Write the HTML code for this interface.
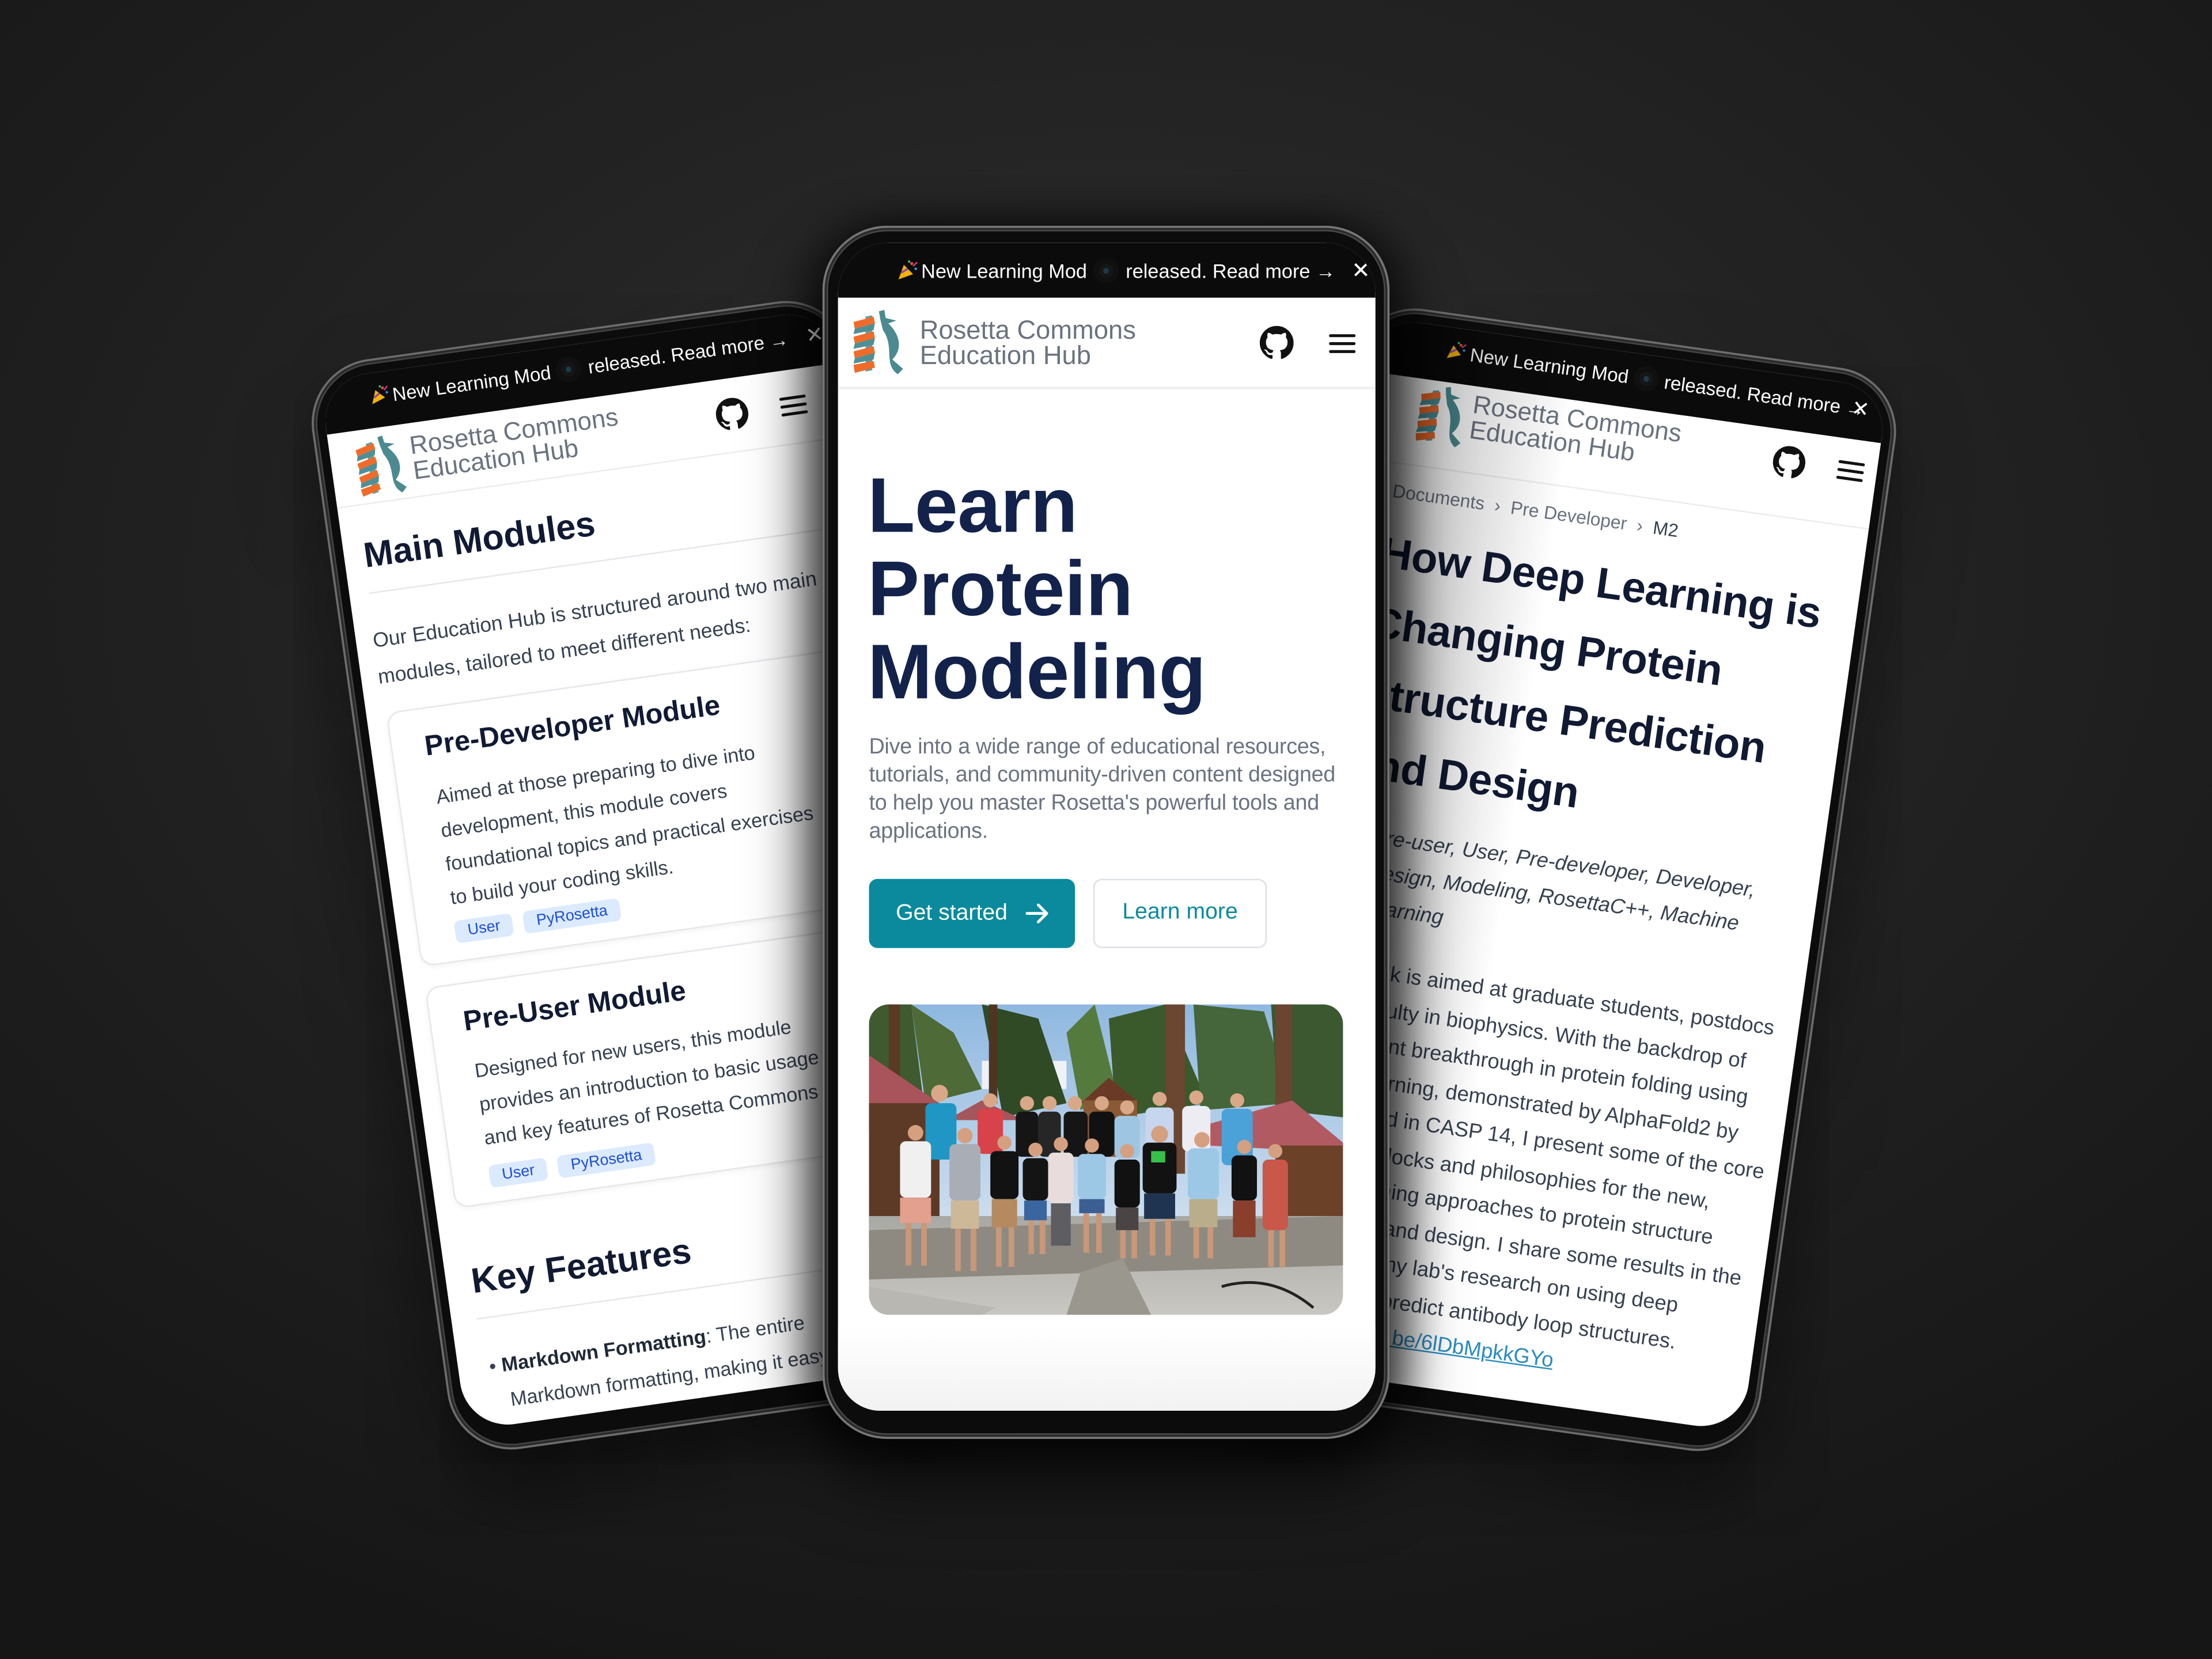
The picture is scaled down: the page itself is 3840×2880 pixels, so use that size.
<!DOCTYPE html>
<html><head><meta charset="utf-8">
<style>
*{margin:0;padding:0;box-sizing:border-box}
html,body{width:3840px;height:2880px;overflow:hidden;background:#1a1a1a}
#bg{position:absolute;left:0;top:0;width:3840px;height:2880px;background:radial-gradient(ellipse 75% 70% at 50% 35%,#2f2f2f 0%,#232323 45%,#161616 100%)}
#s{position:absolute;left:0;top:0;width:1568px;height:1176px;transform:scale(2.44898);transform-origin:0 0;font-family:"Liberation Sans",sans-serif}
.phone{position:absolute;background:#0c0c0c;border-radius:46px;box-shadow:inset 0 0 0 1.5px #6d6d6d,inset 0 0 0 3px #2a2a2a,inset 0 0 0 4px #444,0 25px 60px rgba(0,0,0,.65)}
.screen{position:absolute;overflow:hidden;background:#fff;border-radius:34px}
.banner{position:absolute;left:0;top:0;right:0;height:39px;background:#0b0b0b;color:#fff;font-size:14px;white-space:nowrap}
.cam{position:absolute;width:18px;height:18px;border-radius:50%;background:#161616;box-shadow:inset 0 0 0 4px #101010}
.cam:after{content:"";position:absolute;left:7px;top:7px;width:4px;height:4px;border-radius:50%;background:#1d3a4a}
.abs{position:absolute;white-space:nowrap}
.logotxt{color:#6b7280;line-height:18px}
.tag{display:inline-block;background:#dbeafe;color:#1d4ed8;font-size:11px;padding:2px 9px;border-radius:4px;margin-right:8px}
.card{position:absolute;border:1px solid #e5e7eb;border-radius:10px;box-shadow:0 1px 4px rgba(0,0,0,.06);background:#fff}
.navy{color:#111a33}
</style></head><body>
<div id="bg"></div>
<div id="s">

<svg width="0" height="0" style="position:absolute">
<defs>
<symbol id="logo" viewBox="0 0 40 48">
<path d="M9 5 L14 4 L14 45 L9 46 Z" fill="#5f9ea3"/>
<path d="M0 9 L15 5 L16 10 L1 14 Z" fill="#ef6b2a"/>
<path d="M1 14 L16 10 L15 15 L0 18 Z" fill="#4f8f94"/>
<path d="M0 20 L15 16 L16 21 L1 25 Z" fill="#ef6b2a"/>
<path d="M1 25 L16 21 L15 26 L0 29 Z" fill="#4f8f94"/>
<path d="M0 31 L15 27 L16 32 L1 36 Z" fill="#ef6b2a"/>
<path d="M1 36 L16 32 L15 37 L0 40 Z" fill="#4f8f94"/>
<path d="M0 41 L15 38 L16 43 L1 47 Z" fill="#ef6b2a"/>
<path d="M19 1 L23 0 L24 6 L32 8 L26 10 C36 20 36 30 29 37 L37 44 L33 48 C22 40 31 28 22 15 L20 7 Z" fill="#4a8a90"/>
</symbol>
<symbol id="gh" viewBox="0 0 16 16"><path fill="#111" d="M8 0C3.58 0 0 3.58 0 8c0 3.54 2.29 6.530 5.47 7.59.4.07.55-.17.55-.38 0-.19-.01-.82-.01-1.49-2.01.37-2.53-.49-2.69-.94-.09-.23-.48-.94-.82-1.13-.28-.15-.68-.52-.01-.53.63-.01 1.08.58 1.23.82.72 1.21 1.87.87 2.33.66.07-.52.28-.87.51-1.07-1.78-.2-3.64-.89-3.64-3.95 0-.87.31-1.59.82-2.15-.08-.2-.36-1.02.08-2.12 0 0 .67-.21 2.2.82.64-.18 1.32-.27 2-.27.68 0 1.36.09 2 .27 1.53-1.04 2.2-.82 2.2-.82.44 1.1.16 1.92.08 2.12.51.56.82 1.27.82 2.15 0 3.07-1.87 3.75-3.65 3.95.29.25.54.73.54 1.48 0 1.07-.01 1.93-.01 2.2 0 .21.15.46.55.38A8.013 8.013 0 0016 8c0-4.42-3.58-8-8-8z"/></symbol>
<symbol id="ham" viewBox="0 0 20 16"><rect x="0" y="1" width="20" height="2.2" rx="1" fill="#111"/><rect x="0" y="7" width="20" height="2.2" rx="1" fill="#111"/><rect x="0" y="13" width="20" height="2.2" rx="1" fill="#111"/></symbol>
<symbol id="pop" viewBox="0 0 16 16"><path d="M1 15 L5 4 L12 11 Z" fill="#f4b400"/><path d="M3 10 L8 7" stroke="#8e44ad" stroke-width="1.5"/><circle cx="11" cy="3" r="1.2" fill="#e74c3c"/><circle cx="14" cy="7" r="1" fill="#3498db"/><circle cx="9" cy="1.5" r="0.9" fill="#2ecc71"/><path d="M12 5 L15 2" stroke="#e84393" stroke-width="1"/></symbol>
</defs>
</svg>

<!-- LEFT PHONE -->
<div class="phone" style="left:215px;top:261px;width:385px;height:780px;transform-origin:0 0;transform:rotate(-8deg)">
 <div class="screen" style="left:10px;top:10px;right:10px;bottom:18px">
  <div class="banner">
   <svg class="abs" style="left:34px;top:9px" width="14" height="14"><use href="#pop"/></svg>
   <span class="abs" style="left:50px;top:10px;font-size:13.5px">New Learning Mod</span>
   <div class="cam" style="left:167px;top:8px"></div>
   <span class="abs" style="left:190px;top:10px;font-size:13.5px">released. Read more →</span>
   <span class="abs" style="left:346px;top:8px;font-size:15px">✕</span>
  </div>
  <svg class="abs" style="left:18px;top:45px" width="36" height="42"><use href="#logo"/></svg>
  <div class="abs logotxt" style="left:57px;top:46px;font-size:18px">Rosetta Commons<br>Education Hub</div>
  <svg class="abs" style="left:275px;top:53px" width="23" height="23"><use href="#gh"/></svg>
  <svg class="abs" style="left:321px;top:57px" width="19" height="15"><use href="#ham"/></svg>
  <div class="abs" style="left:0;right:0;top:91px;height:1px;background:#ececec"></div>
  <div class="abs navy" style="left:14px;top:114px;font-size:25px;font-weight:bold">Main Modules</div>
  <div class="abs" style="left:14px;right:0;top:154px;height:1px;background:#e5e7eb"></div>
  <div class="abs" style="left:12px;top:176px;font-size:14.5px;line-height:26px;color:#374151">Our Education Hub is structured around two main<br>modules, tailored to meet different needs:</div>
  <div class="card" style="left:14px;top:240px;width:380px;height:182px">
   <div class="abs navy" style="left:23px;top:16px;font-size:20px;font-weight:bold">Pre-Developer Module</div>
   <div class="abs" style="left:26px;top:51px;font-size:14px;line-height:24px;color:#374151">Aimed at those preparing to dive into<br>development, this module covers<br>foundational topics and practical exercises<br>to build your coding skills.</div>
   <div class="abs" style="left:26px;top:150px"><span class="tag">User</span><span class="tag">PyRosetta</span></div>
  </div>
  <div class="card" style="left:14px;top:437px;width:380px;height:158px">
   <div class="abs navy" style="left:23px;top:16px;font-size:20px;font-weight:bold">Pre-User Module</div>
   <div class="abs" style="left:26px;top:50px;font-size:14px;line-height:24px;color:#374151">Designed for new users, this module<br>provides an introduction to basic usage<br>and key features of Rosetta Commons</div>
   <div class="abs" style="left:26px;top:128px"><span class="tag">User</span><span class="tag">PyRosetta</span></div>
  </div>
  <div class="abs navy" style="left:18px;top:634px;font-size:25px;font-weight:bold">Key Features</div>
  <div class="abs" style="left:18px;right:0;top:674px;height:1px;background:#e5e7eb"></div>
  <div class="abs" style="left:22px;top:697px;font-size:14px;line-height:25px;color:#374151">• <b style="color:#1f2937">Markdown Formatting</b>: The entire<br>&nbsp;&nbsp;&nbsp;Markdown formatting, making it easy<br>&nbsp;&nbsp;&nbsp;and it also has a translation</div>
 </div>
</div>

<!-- RIGHT PHONE -->
<div class="phone" style="left:960px;top:267px;width:390px;height:775px;transform-origin:100% 0;transform:rotate(8deg)">
 <div class="screen" style="left:10px;top:10px;right:10px;bottom:18px">
  <div class="banner">
   <svg class="abs" style="left:56px;top:9px" width="14" height="14"><use href="#pop"/></svg>
   <span class="abs" style="left:73px;top:10px;font-size:13.5px">New Learning Mod</span>
   <div class="cam" style="left:190px;top:8px"></div>
   <span class="abs" style="left:212px;top:10px;font-size:13.5px">released. Read more →</span>
   <span class="abs" style="left:346px;top:8px;font-size:15px">✕</span>
  </div>
  <svg class="abs" style="left:42px;top:42px" width="36" height="42"><use href="#logo"/></svg>
  <div class="abs logotxt" style="left:80px;top:43px;font-size:18px">Rosetta Commons<br>Education Hub</div>
  <svg class="abs" style="left:296px;top:50px" width="23" height="23"><use href="#gh"/></svg>
  <svg class="abs" style="left:342px;top:54px" width="19" height="15"><use href="#ham"/></svg>
  <div class="abs" style="left:0;right:0;top:100px;height:1px;background:#ececec"></div>
  <div class="abs" style="left:32px;top:113px;font-size:13px;color:#6b7280">Documents &nbsp;›&nbsp; Pre Developer &nbsp;›&nbsp; <span style="color:#374151">M2</span></div>
  <div class="abs navy" style="left:30px;top:140px;font-size:30.5px;font-weight:bold;line-height:50px;letter-spacing:-.2px">How Deep Learning is<br>Changing Protein<br>Structure Prediction<br>and Design</div>
  <div class="abs" style="left:52px;top:354px;font-size:14.8px;line-height:25px;font-style:italic;color:#374151">Pre-user, User, Pre-developer, Developer,<br>Design, Modeling, RosettaC++, Machine<br>Learning</div>
  <div class="abs" style="left:30px;top:449px;font-size:14.9px;line-height:25.5px;color:#374151">This talk is aimed at graduate students, postdocs<br>and faculty in biophysics. With the backdrop of<br>the recent breakthrough in protein folding using<br>deep learning, demonstrated by AlphaFold2 by<br>DeepMind in CASP 14, I present some of the core<br>building blocks and philosophies for the new,<br>deep learning approaches to protein structure<br>prediction and design. I share some results in the<br>context of my lab's research on using deep<br>learning to predict antibody loop structures.<br><span style="color:#2b8cc0;text-decoration:underline">https://youtu.be/6lDbMpkkGYo</span></div>
  <div class="abs" style="left:0;top:0;width:150px;bottom:0;background:linear-gradient(to right,rgba(0,0,0,.35),rgba(0,0,0,0))"></div>
 </div>
</div>

<!-- CENTER PHONE -->
<div class="phone" style="left:583px;top:160px;width:402px;height:860px;box-shadow:inset 0 0 0 1.5px #777,inset 0 0 0 3px #2a2a2a,inset 0 0 0 4px #484848,0 30px 80px rgba(0,0,0,.7),-10px 0 30px rgba(0,0,0,.5),10px 0 30px rgba(0,0,0,.5)">
 <div class="screen" style="left:11px;top:12px;right:10px;bottom:20px;border-radius:36px 36px 30px 30px">
  <div class="banner">
   <svg class="abs" style="left:42px;top:12px" width="15" height="15"><use href="#pop"/></svg>
   <span class="abs" style="left:59px;top:12px">New Learning Mod</span>
   <div class="cam" style="left:181px;top:11px"></div>
   <span class="abs" style="left:204px;top:12px">released. Read more →</span>
   <span class="abs" style="left:364px;top:10px;font-size:16px">✕</span>
  </div>
  <svg class="abs" style="left:11px;top:47px" width="38" height="47"><use href="#logo"/></svg>
  <div class="abs logotxt" style="left:58px;top:53px;font-size:18.5px">Rosetta Commons<br>Education Hub</div>
  <svg class="abs" style="left:299px;top:59px" width="24" height="24"><use href="#gh"/></svg>
  <svg class="abs" style="left:348px;top:64px" width="19" height="15"><use href="#ham"/></svg>
  <div class="abs" style="left:0;right:0;top:102px;height:2px;background:#f0f0f0"></div>
  <div class="abs" style="left:21px;top:157px;font-size:55px;font-weight:bold;line-height:59px;color:#13224a;letter-spacing:-.2px">Learn<br>Protein<br>Modeling</div>
  <div class="abs" style="left:22px;top:348px;font-size:15.4px;line-height:20px;color:#6b7280;letter-spacing:-.1px">Dive into a wide range of educational resources,<br>tutorials, and community-driven content designed<br>to help you master Rosetta's powerful tools and<br>applications.</div>
  <div class="abs" style="left:22px;top:451px;width:146px;height:49px;background:#0a8a9c;border-radius:6px;color:#fff;font-size:16px;line-height:49px;padding-left:19px">Get started
   <svg class="abs" style="left:111px;top:17px" width="17" height="15" viewBox="0 0 17 15"><path d="M1 7.5 H15 M9 1.5 L15 7.5 L9 13.5" stroke="#fff" stroke-width="2" fill="none" stroke-linecap="round" stroke-linejoin="round"/></svg></div>
  <div class="abs" style="left:181px;top:451px;width:123px;height:49px;border:1.5px solid #dcdfe4;border-radius:6px;color:#0a8a9c;font-size:16px;line-height:46px;text-align:center">Learn more</div>
  <svg class="abs" style="left:22px;top:540px;border-radius:14px" width="336" height="220" viewBox="0 0 336 220">
   <defs><linearGradient id="sky" x1="0" y1="0" x2="0" y2="1"><stop offset="0" stop-color="#8fb8e0"/><stop offset="1" stop-color="#e8eef4"/></linearGradient>
   <linearGradient id="gr" x1="0" y1="0" x2="0" y2="1"><stop offset="0" stop-color="#a8a8a4"/><stop offset="1" stop-color="#c9c7c2"/></linearGradient></defs>
   <rect width="336" height="220" fill="url(#sky)"/>
   <rect x="80" y="40" width="60" height="20" fill="#eef2f6"/>
   <path d="M0 0 L30 0 L40 80 L0 90Z" fill="#3e5a2e"/>
   <path d="M30 0 L60 20 L80 60 L40 70Z" fill="#4d6a37"/>
   <path d="M80 0 L120 10 L140 70 L95 80Z" fill="#2f4a25"/>
   <path d="M140 20 L160 0 L175 60 L150 75Z" fill="#557a3e"/>
   <path d="M170 10 L210 0 L240 70 L175 80Z" fill="#3a5a2c"/>
   <path d="M230 0 L280 5 L300 70 L235 75Z" fill="#45653a"/>
   <path d="M285 0 L336 0 L336 80 L290 75Z" fill="#3b5830"/>
   <rect x="14" y="0" width="8" height="80" fill="#5a3a25"/>
   <rect x="85" y="0" width="6" height="70" fill="#4e3422"/>
   <rect x="210" y="0" width="14" height="120" fill="#6b4630"/>
   <rect x="288" y="0" width="12" height="140" fill="#6b4530"/>
   <path d="M0 36 L50 70 L0 75Z" fill="#a8545a"/>
   <rect x="0" y="70" width="50" height="100" fill="#5d3a26"/>
   <path d="M55 82 L80 68 L110 82Z" fill="#a5565c"/>
   <path d="M150 70 L170 52 L192 70Z" fill="#6a3a26"/>
   <rect x="152" y="68" width="38" height="40" fill="#8a5a36"/>
   <path d="M240 85 L300 68 L336 98 L336 105 L240 100Z" fill="#b25a62"/>
   <rect x="290" y="100" width="46" height="60" fill="#6b4228"/>
   <rect x="0" y="150" width="336" height="70" fill="url(#gr)"/>
   <path d="M0 160 L336 150 L336 185 L0 195Z" fill="#8e8a82"/>
   <path d="M0 200 L90 215 L80 220 L0 220Z" fill="#b9b7b1"/>
   <path d="M150 190 L180 180 L200 220 L140 220Z" fill="#9a978f"/>
   <path d="M250 200 Q285 190 315 215" stroke="#222" stroke-width="2" fill="none"/>
   <g>
    <g fill="#d8a888"><circle cx="50" cy="63" r="6"/><circle cx="86" cy="68" r="5"/><circle cx="112" cy="70" r="5"/><circle cx="128" cy="70" r="5"/><circle cx="146" cy="70" r="5"/><circle cx="165" cy="70" r="5"/><circle cx="183" cy="73" r="5"/><circle cx="206" cy="67" r="5"/><circle cx="232" cy="66" r="5"/><circle cx="261" cy="68" r="5"/></g>
    <rect x="40" y="70" width="22" height="40" rx="4" fill="#1f96c4"/>
    <rect x="77" y="74" width="18" height="32" rx="4" fill="#d8434a"/>
    <rect x="104" y="76" width="16" height="32" rx="4" fill="#151515"/>
    <rect x="120" y="76" width="16" height="32" rx="4" fill="#262626"/>
    <rect x="138" y="76" width="17" height="32" rx="4" fill="#151515"/>
    <rect x="156" y="76" width="18" height="32" rx="4" fill="#111"/>
    <rect x="174" y="79" width="18" height="30" rx="4" fill="#9ec6e2"/>
    <rect x="196" y="73" width="20" height="30" rx="4" fill="#c6d6ee"/>
    <rect x="222" y="72" width="20" height="32" rx="4" fill="#ececf2"/>
    <rect x="250" y="74" width="22" height="40" rx="4" fill="#4aa2d8"/>
    <g fill="#d5a080"><circle cx="33" cy="91" r="5.5"/><circle cx="68" cy="93" r="5.5"/><circle cx="96" cy="98" r="5"/><circle cx="118" cy="103" r="5"/><circle cx="136" cy="99" r="5"/><circle cx="158" cy="100" r="5"/><circle cx="183" cy="104" r="5"/><circle cx="206" cy="92" r="6"/><circle cx="236" cy="96" r="5.5"/><circle cx="266" cy="101" r="5"/><circle cx="288" cy="104" r="5"/></g>
    <rect x="22" y="97" width="22" height="40" rx="4" fill="#f0f0f0"/>
    <rect x="22" y="137" width="22" height="18" fill="#e3a08e"/>
    <rect x="57" y="99" width="22" height="40" rx="4" fill="#a9aeb6"/>
    <rect x="58" y="139" width="20" height="20" fill="#cdb898"/>
    <rect x="86" y="104" width="20" height="34" rx="4" fill="#121212"/>
    <rect x="87" y="138" width="18" height="20" fill="#b48a5e"/>
    <rect x="109" y="109" width="18" height="30" rx="4" fill="#141414"/>
    <rect x="110" y="139" width="16" height="14" fill="#3a66a0"/>
    <rect x="127" y="105" width="18" height="36" rx="4" fill="#e8dcdc"/>
    <rect x="129" y="141" width="14" height="30" fill="#5d5d62"/>
    <rect x="148" y="106" width="20" height="32" rx="4" fill="#9cc8e6"/>
    <rect x="149" y="138" width="18" height="10" fill="#3b5f93"/>
    <rect x="174" y="110" width="18" height="34" rx="4" fill="#111"/>
    <rect x="175" y="144" width="16" height="16" fill="#4a4444"/>
    <rect x="194" y="98" width="24" height="36" rx="4" fill="#121212"/>
    <rect x="200" y="104" width="10" height="8" fill="#38c04a"/>
    <rect x="195" y="134" width="22" height="18" fill="#1f3450"/>
    <rect x="226" y="102" width="22" height="36" rx="4" fill="#9cc8e6"/>
    <rect x="227" y="138" width="20" height="20" fill="#b9ad8c"/>
    <rect x="257" y="107" width="18" height="32" rx="4" fill="#111"/>
    <rect x="258" y="139" width="16" height="26" fill="#8a3e2c"/>
    <rect x="279" y="110" width="18" height="50" rx="4" fill="#c9574a"/>
    <g fill="#c89878"><rect x="26" y="155" width="4" height="30"/><rect x="37" y="155" width="4" height="30"/><rect x="61" y="159" width="4" height="30"/><rect x="72" y="159" width="4" height="30"/><rect x="90" y="158" width="4" height="28"/><rect x="99" y="158" width="4" height="28"/><rect x="113" y="153" width="4" height="24"/><rect x="121" y="153" width="4" height="24"/><rect x="152" y="148" width="4" height="28"/><rect x="161" y="148" width="4" height="28"/><rect x="178" y="160" width="4" height="20"/><rect x="186" y="160" width="4" height="20"/><rect x="199" y="152" width="4" height="26"/><rect x="210" y="152" width="4" height="26"/><rect x="230" y="158" width="4" height="22"/><rect x="240" y="158" width="4" height="22"/><rect x="283" y="160" width="4" height="26"/><rect x="291" y="160" width="4" height="26"/></g>
   </g>
  </svg>
  <div class="abs" style="left:0;right:0;bottom:0;height:60px;background:linear-gradient(#fff,#f2f2f2)"></div>
 </div>
</div>

</div>
</body></html>
